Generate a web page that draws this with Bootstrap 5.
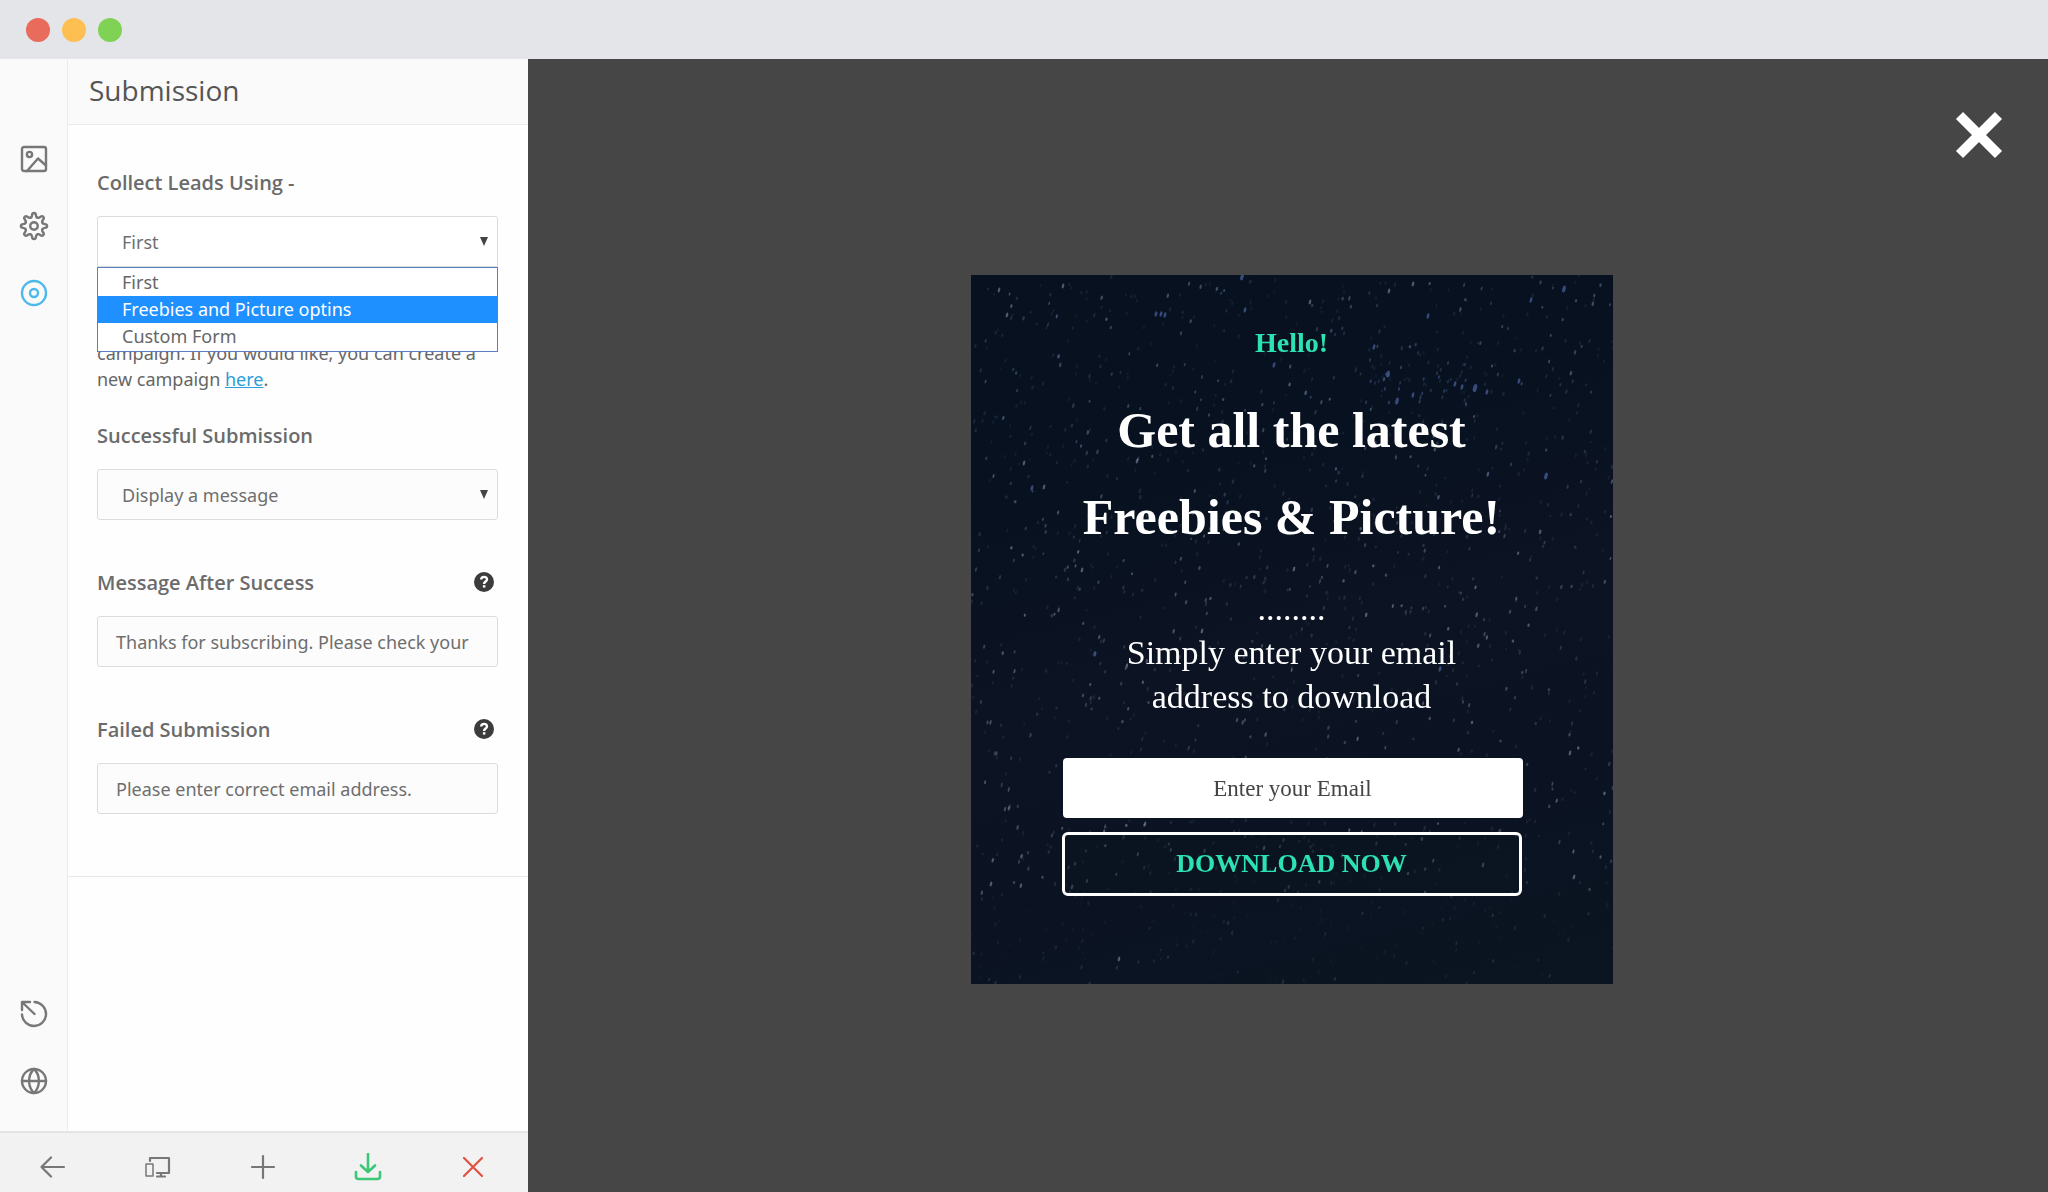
<!DOCTYPE html>
<html lang="en">
<head>
<meta charset="utf-8">
<meta name="viewport" content="width=device-width, initial-scale=1">
<title>Submission</title>
<link href="https://cdn.jsdelivr.net/npm/bootstrap@5.3.0/dist/css/bootstrap.min.css" rel="stylesheet">
<style>
  body { font-family: "Noto Sans", "Open Sans", sans-serif; font-size: 18px; line-height: 26px; color: #666; }
  .window-bar { height: 59px; background: #e3e5e9; padding-left: 26px; gap: 12px; }
  .window-dot { width: 24px; height: 24px; }
  .dot-close { background: #e86b5c; }
  .dot-min { background: #fdbf51; }
  .dot-max { background: #80d255; }

  .editor { width: 528px; background: #fefefe; }
  .rail { width: 68px; background: #fafafa; border-right: 1px solid #ebebeb; padding: 66px 0 17px; }
  .rail-btn { height: 67px; width: 67px; color: #777; }
  .rail-btn.active { color: #4db8ec; }
  .icon-btn { background: none; border: 0; padding: 0; display: flex; align-items: center; justify-content: center; }
  .icon-btn svg, .help-btn svg, .popup-close svg { display: block; fill: none; stroke: currentColor; stroke-width: 2.4; stroke-linecap: round; stroke-linejoin: round; }

  .panel-head { height: 66px; background: #fafafa; border-bottom: 1px solid #ebebeb; padding: 0 21px 4px; }
  .panel-title { font-family: "Open Sans", sans-serif; font-size: 28px; line-height: 38px; font-weight: 400; color: #555; }
  .panel-form { padding: 45px 30px 62px 29px; border-bottom: 1px solid #e6e6e6; }
  .field { margin-bottom: 50px; }
  .field-label { font-family: "Open Sans", sans-serif; font-size: 20px; font-weight: 600; color: #6b6b6b; margin-bottom: 20px; }
  .field-box { height: 51px; border: 1px solid #dcdcdc; border-radius: 3px; background-color: #fcfcfc; color: #6e6e6e; font-size: 18px; line-height: 26px; padding: 12px 12px 11px 18px; }
  .field-pick { padding-left: 24px; background-image: url("data:image/svg+xml,%3Csvg xmlns='http://www.w3.org/2000/svg' viewBox='0 0 8 9'%3E%3Cpath d='M0 0h8L4 9z' fill='%23444'/%3E%3C/svg%3E"); background-size: 8px 9px; background-position: right 9px top 20px; }
  .field-open { background-color: #fff; border-bottom-left-radius: 0; border-bottom-right-radius: 0; }
  .pick-list { top: 100%; left: 0; right: 0; z-index: 5; background: #fff; border: 1px solid #5b80bd; padding: 1px 0; }
  .pick-list li { height: 27px; padding-left: 24px; color: #666; }
  .pick-list li.chosen { background: #1e90ff; color: #fff; }
  .field-note { margin: 73px 0 31px; }
  .field-note a { color: #2a9fd8; }
  .help-btn { width: 20px; height: 20px; background: none; border: 0; padding: 0; margin-right: 4px; margin-top: 2px; }

  .tools { height: 61px; background: #f2f2f2; border-top: 2px solid #e4e4e4; padding: 8px 2px 0 0; color: #777; }
  .tools .icon-btn { flex: 1 1 0; }
  .tools svg { stroke-width: 2.2; }
  .tool-save { color: #3cc777; }
  .tool-drop { color: #e0503f; }

  .stage { background: #464646; padding: 8px 0 0 7px; }
  .popup-close { top: 52px; right: 45px; width: 48px; height: 48px; color: #fff; background: none; border: 0; padding: 0; }
  .popup-close svg { stroke-width: 10; stroke-linecap: butt; }
  .popup { width: 642px; min-height: 709px; padding: 42px 91px 88px; font-family: "Liberation Serif", serif; color: #fff; background: linear-gradient(165deg, #07111f 0%, #07111f 25%, #0c1323 50%, #0b1322 75%, #0a1521 100%); }
  .stars { inset: 0; width: 100%; height: 100%; }
  .popup-hello { font-size: 28px; line-height: 52px; font-weight: 700; color: #2de2b2; }
  .popup-head { font-size: 50px; line-height: 87px; font-weight: 700; margin: 18px 0 26px; }
  .popup-text { font-size: 34px; line-height: 44px; margin-bottom: 39px; }
  .popup-input, .popup-btn { font-family: "Liberation Serif", serif; }
  .popup-input { height: 60px; border: 0; border-radius: 4px; background: #fff; color: #444; font-size: 23px; padding: 8px 10px 6px; margin: 0 0 14px 1px; }
  .popup-input::placeholder { color: #444; opacity: 1; }
  .popup-btn { height: 64px; border: 3px solid #fff; border-radius: 6px; font-size: 26px; line-height: 30px; font-weight: 700; color: #2de2b2; padding: 11px 0; background: rgba(10, 22, 32, .4); }
</style>
</head>
<body>
<div class="d-flex flex-column min-vh-100">
  <header class="window-bar d-flex align-items-center flex-shrink-0">
    <span class="window-dot dot-close rounded-circle"></span>
    <span class="window-dot dot-min rounded-circle"></span>
    <span class="window-dot dot-max rounded-circle"></span>
  </header>

  <div class="d-flex flex-grow-1">
    <aside class="editor d-flex flex-column flex-shrink-0">
      <div class="d-flex flex-grow-1">
        <nav class="rail d-flex flex-column flex-shrink-0" aria-label="Sections">
          <button type="button" class="icon-btn rail-btn" aria-label="Design">
            <svg width="28" height="28" viewBox="0 0 28 28"><rect x="2" y="2" width="24" height="24" rx="2"/><circle cx="9.500" cy="9.500" r="2.600"/><path d="M7 26 18 13.500 26 20.500"/></svg>
          </button>
          <button type="button" class="icon-btn rail-btn" aria-label="Settings">
            <svg width="30" height="30" viewBox="-15 -15 30 30">
              <defs><path id="tooth" d="M-3.440-8.310C-2.400-8.700-2-9.500-1.900-10.900C-1.700-13.800 1.700-13.800 1.900-10.900C2-9.500 2.400-8.700 3.440-8.310"/></defs>
              <use href="#tooth"/><use href="#tooth" transform="rotate(45)"/><use href="#tooth" transform="rotate(90)"/><use href="#tooth" transform="rotate(135)"/><use href="#tooth" transform="rotate(180)"/><use href="#tooth" transform="rotate(225)"/><use href="#tooth" transform="rotate(270)"/><use href="#tooth" transform="rotate(315)"/>
              <circle r="3.800"/>
            </svg>
          </button>
          <button type="button" class="icon-btn rail-btn active" aria-label="Submission">
            <svg width="28" height="28" viewBox="0 0 28 28"><circle cx="14" cy="14" r="12"/><circle cx="14" cy="14" r="4"/></svg>
          </button>
          <button type="button" class="icon-btn rail-btn mt-auto" aria-label="Reset">
            <svg width="28" height="28" viewBox="0 0 28 28"><path d="M14.500 2A12 12 0 1 1 2 14.500M14.500 14 2.500 2.500M10 2H2v8"/></svg>
          </button>
          <button type="button" class="icon-btn rail-btn" aria-label="Language">
            <svg width="28" height="28" viewBox="0 0 28 28"><circle cx="14" cy="14" r="12"/><path d="M2 14h24M14 2C7.500 8 7.500 20 14 26M14 2c6.500 6 6.500 18 0 24"/></svg>
          </button>
        </nav>

        <section class="flex-grow-1">
          <div class="panel-head d-flex align-items-center">
            <h1 class="panel-title m-0">Submission</h1>
          </div>
          <form class="panel-form">
            <div>
              <label class="field-label d-block" for="leads">Collect Leads Using -</label>
              <div class="position-relative">
                <select id="leads" class="form-select field-box field-pick field-open">
                  <option selected>First</option>
                  <option>Freebies and Picture optins</option>
                  <option>Custom Form</option>
                </select>
                <ul class="pick-list list-unstyled position-absolute m-0" role="listbox" aria-label="Collect Leads Using">
                  <li role="option">First</li>
                  <li role="option" class="chosen" aria-selected="true">Freebies and Picture optins</li>
                  <li role="option">Custom Form</li>
                </ul>
              </div>
              <p class="field-note">campaign. If you would like, you can create a new campaign <a href="#">here</a>.</p>
            </div>
            <div class="field">
              <label class="field-label d-block" for="success">Successful Submission</label>
              <select id="success" class="form-select field-box field-pick"><option>Display a message</option></select>
            </div>
            <div class="field">
              <div class="d-flex justify-content-between">
                <label class="field-label" for="message">Message After Success</label>
                <button type="button" class="help-btn" aria-label="Help"><svg width="20" height="20" viewBox="0 0 20 20"><circle cx="10" cy="10" r="10" fill="#3c3c3c" stroke="none"/><path d="M7.200 7.600C7.200 4 13 4 13 7.400C13 9.600 10.100 9.500 10.100 12" stroke="#fff" stroke-width="2.400" stroke-linecap="butt"/><path d="M8.900 13.200h2.500v2.400H8.900z" fill="#fff" stroke="none"/></svg></button>
              </div>
              <input id="message" type="text" class="form-control field-box" value="Thanks for subscribing. Please check your">
            </div>
            <div>
              <div class="d-flex justify-content-between">
                <label class="field-label" for="failed">Failed Submission</label>
                <button type="button" class="help-btn" aria-label="Help"><svg width="20" height="20" viewBox="0 0 20 20"><circle cx="10" cy="10" r="10" fill="#3c3c3c" stroke="none"/><path d="M7.200 7.600C7.200 4 13 4 13 7.400C13 9.600 10.100 9.500 10.100 12" stroke="#fff" stroke-width="2.400" stroke-linecap="butt"/><path d="M8.900 13.200h2.500v2.400H8.900z" fill="#fff" stroke="none"/></svg></button>
              </div>
              <input id="failed" type="text" class="form-control field-box" value="Please enter correct email address.">
            </div>
          </form>
        </section>
      </div>

      <footer class="tools d-flex flex-shrink-0">
        <button type="button" class="icon-btn text-reset" aria-label="Back"><svg width="26" height="26" viewBox="0 0 26 26"><path d="M1.500 13H24M11 3.500 1.500 13 11 22.500"/></svg></button>
        <button type="button" class="icon-btn text-reset" aria-label="Devices"><svg width="28" height="24" viewBox="0 0 28 24"><path d="M6 6V3h19v15H13"/><path d="M2 9h7v12H2z" stroke-width="1.500"/><path d="M13 21.500h8M17 18v3"/></svg></button>
        <button type="button" class="icon-btn text-reset" aria-label="Add"><svg width="26" height="26" viewBox="0 0 26 26"><path d="M13 2v22M2 13h22"/></svg></button>
        <button type="button" class="icon-btn tool-save" aria-label="Save"><svg width="28" height="28" viewBox="0 0 28 28"><path d="M14 1v18M7 12.500l7 6.500 7-6.500M2 19v4.500Q2 26 4.500 26h19Q26 26 26 23.500V19" stroke-width="2.600"/></svg></button>
        <button type="button" class="icon-btn tool-drop" aria-label="Discard"><svg width="22" height="22" viewBox="0 0 22 22"><path d="M2 2l18 18M20 2 2 20"/></svg></button>
      </footer>
    </aside>

    <main class="stage flex-grow-1 d-flex align-items-center justify-content-center position-relative">
      <button type="button" class="popup-close position-absolute" aria-label="Close"><svg width="48" height="48" viewBox="0 0 48 48"><path d="M4.500 4.500l39 39M43.500 4.500l-39 39"/></svg></button>
      <div class="popup position-relative text-center">
        <canvas id="stars" class="stars position-absolute" width="642" height="709"></canvas>
        <form class="position-relative">
          <p class="popup-hello m-0">Hello!</p>
          <h2 class="popup-head">Get all the latest<br>Freebies &amp; Picture!</h2>
          <p class="popup-text">........<br>Simply enter your email<br>address to download</p>
          <input type="email" class="popup-input form-control text-center" placeholder="Enter your Email" aria-label="Enter your Email">
          <button type="button" class="popup-btn btn w-100 d-block">DOWNLOAD NOW</button>
        </form>
      </div>
    </main>
  </div>
</div>
<script src="https://cdn.jsdelivr.net/npm/bootstrap@5.3.0/dist/js/bootstrap.bundle.min.js"></script>
<script>
  // Night sky: a seeded field of faint star trails, plus the brighter stars.
  const ctx = document.getElementById('stars').getContext('2d');
  let seed = 4711;
  const rnd = () => (seed = (seed * 16807) % 2147483647) / 2147483647;
  function star(x, y, rx, ry, color) {
    ctx.fillStyle = color;
    ctx.beginPath();
    ctx.ellipse(x, y, rx, ry, 0.25, 0, Math.PI * 2);
    ctx.fill();
  }
  for (let i = 0; i < 1500; i++) {
    const x = rnd() * 642, y = rnd() * 709, a = Math.pow(rnd(), 3) * 0.42 + 0.09;
    const fade = y > 620 ? 0.35 : 1;
    const tint = y < 230 ? '125,155,195' : '160,170,190';
    star(x, y, 0.9 + rnd() * 0.4, 1.4 + rnd() * 1.1, `rgba(${tint},${a * fade})`);
  }
  for (let i = 0; i < 50; i++) {
    star(395 + rnd() * 120, 70 + rnd() * 60, 1, 2, `rgba(95,125,185,${0.12 + rnd() * 0.3})`);
  }
  const bright = [[593,14,3],[560,25,2],[457,41,2],[504,113,4],[484,109,2],[491,112,2],[516,117,2],[417,99,3],[426,126,3],[442,120,2],[403,72,2],[575,201,3],[271,2,3],[185,39,2],[194,40,2],[190,39,2],[274,35,2],[548,106,2],[303,90,2],[469,394,2],[124,379,2],[61,213,2]];
  bright.forEach(([x, y, s]) => star(x, y, 0.6 + s * 0.35, 1.4 + s * 0.7, 'rgba(85,112,180,.62)'));
  const pale = [[28,15],[92,11],[36,40],[111,295],[231,356],[323,294],[73,212],[148,684],[101,612],[293,573],[599,478],[174,549],[603,602],[166,186],[53,188],[442,9],[418,16],[339,27],[394,527],[133,557],[38,533],[512,590],[20,609]];
  pale.forEach(([x, y]) => star(x, y, 1.2, 2.6, 'rgba(150,165,190,.5)'));
</script>
</body>
</html>
